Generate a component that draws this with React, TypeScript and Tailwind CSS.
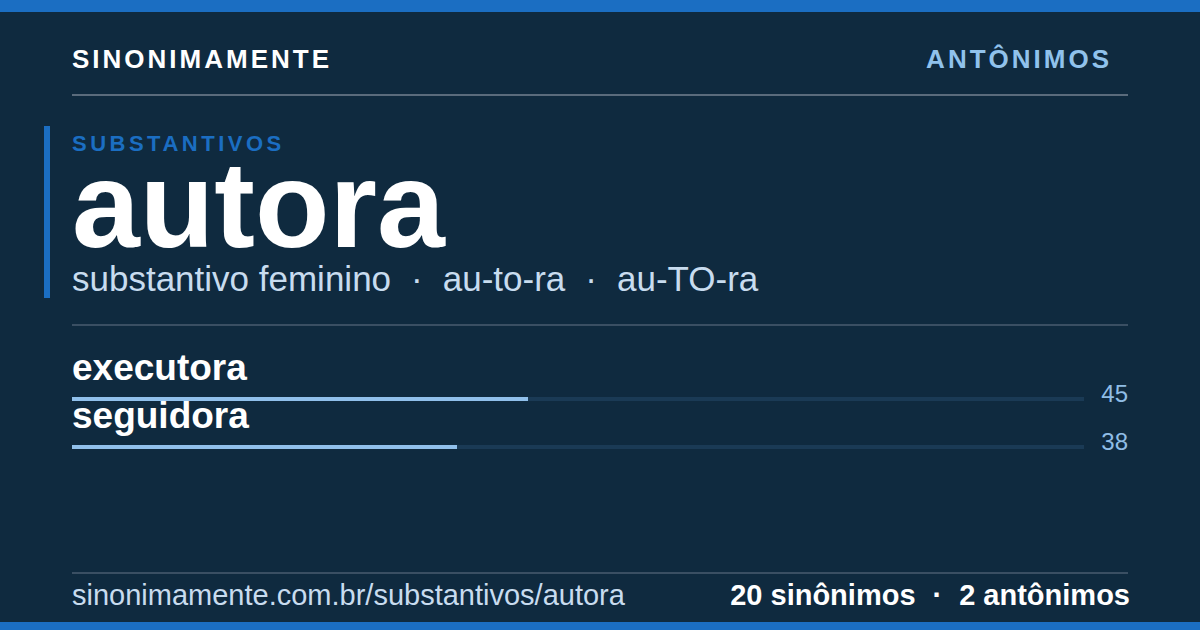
const synonyms = [
  { word: "executora", score: 45 },
  { word: "seguidora", score: 38 },
];

const App = () => {
  return (
    <div className="w-[1200px] h-[630px] flex flex-col bg-[#0f2a3f] font-['Liberation_Sans',Arial,sans-serif] overflow-hidden">
      <div className="h-[12px] bg-[#1b6ec2]" />

      <div className="flex-1 flex flex-col px-[44px]">
        {/* header */}
        <div className="mx-[28px] pt-[34px] flex justify-between items-start">
          <span className="text-[26px] leading-none font-bold tracking-[3px] text-white">SINONIMAMENTE</span>
          <span className="mr-[16px] text-[26px] leading-none font-bold tracking-[3px] text-[#90c2ec]">ANTÔNIMOS</span>
        </div>
        <div className="mx-[28px] mt-[22px] h-[2px] bg-[#5a6b7c]" />

        {/* hero */}
        <div className="mt-[30px] border-l-[6px] border-[#1b6ec2] pl-[22px] pt-[7px] pb-[2px] flex flex-col">
          <span className="text-[22px] leading-none font-bold tracking-[3.5px] text-[#1b6ec2]">SUBSTANTIVOS</span>
          <h1 className="text-[122px] leading-[100px] font-bold text-white">autora</h1>
          <p className="mt-[6px] text-[35px] leading-none text-[#c8dcef] flex">
            <span>substantivo feminino</span>
            <span className="mx-[20px]">·</span>
            <span>au-to-ra</span>
            <span className="mx-[20px]">·</span>
            <span>au-TO-ra</span>
          </p>
        </div>
        <div className="mx-[28px] mt-[26px] h-[2px] bg-[#3a4f63]" />

        {/* synonyms */}
        <div className="mx-[28px] mt-[27px] flex flex-col">
          {synonyms.map(s => (
            <div key={s.word} className="flex items-end">
              <div className="flex-1 flex flex-col">
                <span className="text-[37px] leading-[29px] font-bold text-white">{s.word}</span>
                <div className="mt-[15px] h-[4px] bg-[#1a3a55]">
                  <div className="h-full bg-[#90c0eb]" style={{ width: `${s.score}%` }} />
                </div>
              </div>
              <span className="ml-[17px] -mb-[5px] text-[24px] leading-none text-[#8fbde6] text-right">{s.score}</span>
            </div>
          ))}
        </div>

        {/* footer */}
        <div className="mx-[28px] mt-auto mb-[12px]">
          <div className="h-[2px] bg-[#3a4f63]" />
          <div className="mt-[7px] flex justify-between items-start">
            <span className="text-[29px] leading-none text-[#c8dcef]">sinonimamente.com.br/substantivos/autora</span>
            <span className="-mr-[2px] text-[29px] leading-none font-bold text-white flex">
              <span>20 sinônimos</span>
              <span className="mx-[17px]">·</span>
              <span>2 antônimos</span>
            </span>
          </div>
        </div>
      </div>

      <div className="h-[8px] bg-[#1b6ec2]" />
    </div>
  );
};

export default App;
